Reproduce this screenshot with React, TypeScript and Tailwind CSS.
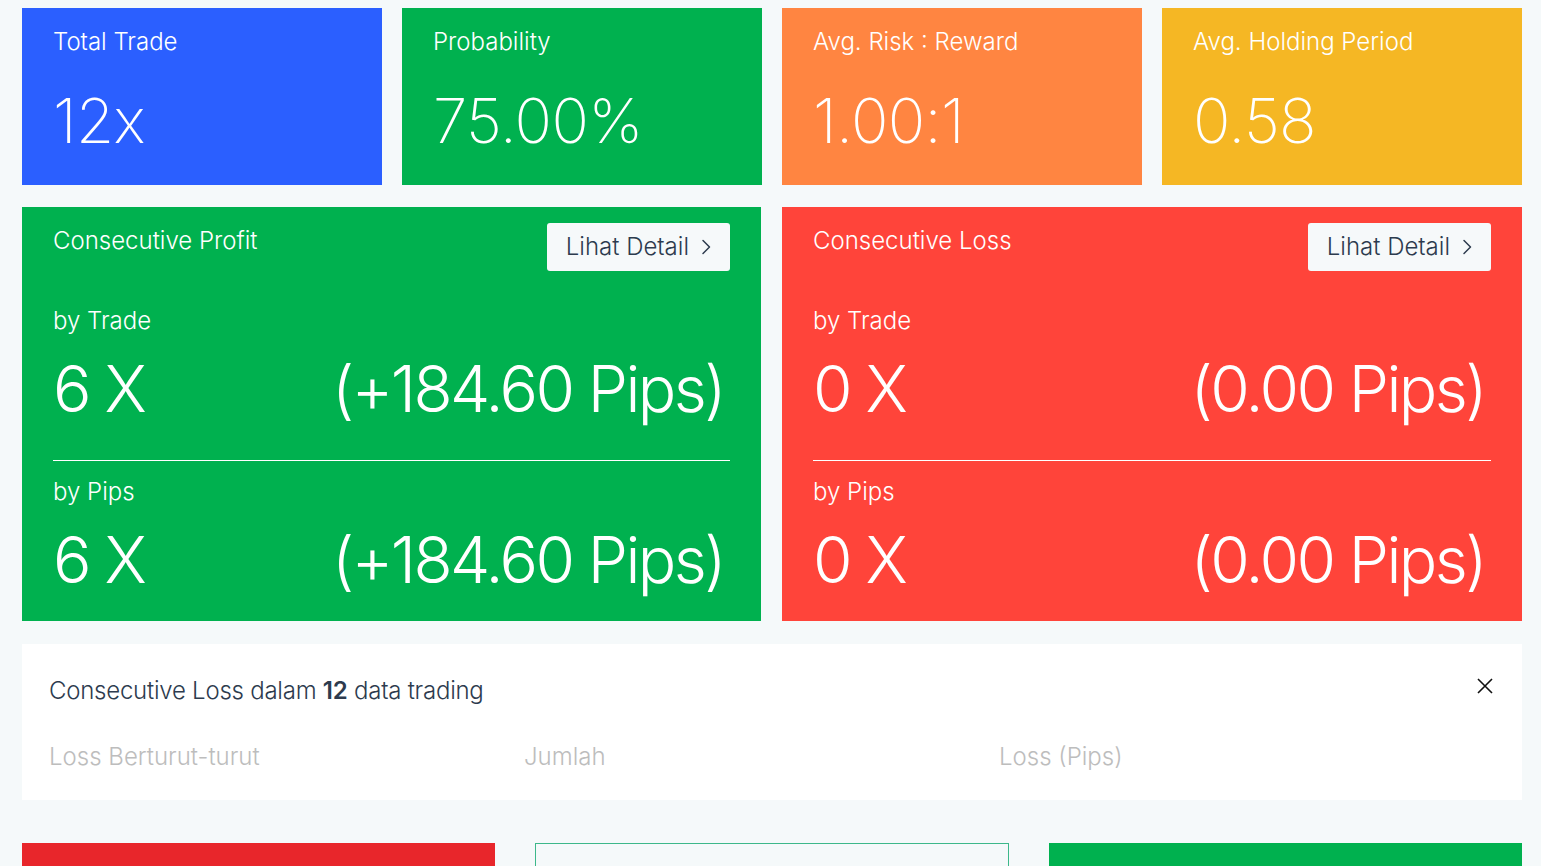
import React from 'react';

interface StatCard {
  label: string;
  value: string;
  bg: string;
}

const stats: StatCard[] = [
  { label: 'Total Trade', value: '12x', bg: 'bg-[#2b5fff]' },
  { label: 'Probability', value: '75.00%', bg: 'bg-[#00b14f]' },
  { label: 'Avg. Risk : Reward', value: '1.00:1', bg: 'bg-[#ff8541]' },
  { label: 'Avg. Holding Period', value: '0.58', bg: 'bg-[#f5b724]' },
];

const Chevron = () => (
  <svg width="14" height="16" viewBox="0 0 14 16" fill="none" stroke="currentColor" strokeWidth="1.5" strokeLinecap="round" strokeLinejoin="round">
    <path d="M4 1.5l6.5 6.5L4 14.5" />
  </svg>
);

interface ConsecutiveProps {
  title: string;
  count: string;
  pips: string;
  bg: string;
}

const ConsecutiveCard: React.FC<ConsecutiveProps> = ({ title, count, pips, bg }) => (
  <div className={`${bg} text-white px-[31px] pt-[16px] h-[414px]`}>
    <div className="flex items-start justify-between">
      <div className="text-[24px] font-light leading-[32px] pt-[2px]">{title}</div>
      <button className="h-[48px] pl-[19px] pr-[17px] flex items-center gap-[10px] rounded-[3px] bg-[#f6f9fa] text-[#2d3b4e] text-[24px] font-light">
        Lihat Detail
        <Chevron />
      </button>
    </div>
    <div className="mt-[36px] text-[24px] font-light leading-[28px]">by Trade</div>
    <div className="flex items-center justify-between text-[64px] font-light leading-[80px] mt-[14px] pr-[6px] tracking-[-0.04em]">
      <span>{count}</span>
      <span>{pips}</span>
    </div>
    <div className="border-t border-white mt-[31px]" />
    <div className="mt-[17px] text-[24px] font-light leading-[28px]">by Pips</div>
    <div className="flex items-center justify-between text-[64px] font-light leading-[80px] mt-[14px] pr-[6px] tracking-[-0.04em]">
      <span>{count}</span>
      <span>{pips}</span>
    </div>
  </div>
);

const App: React.FC = () => {
  return (
    <div className="min-h-[866px] h-[866px] overflow-hidden bg-[#f5f9fa] px-[22px] pt-[8px] font-['Inter',sans-serif]">
      <div className="grid grid-cols-4 gap-[20px] w-[1500px]">
        {stats.map((s) => (
          <div key={s.label} className={`${s.bg} text-white h-[177px] px-[31px] pt-[18px]`}>
            <div className="text-[24px] font-light leading-[32px]">{s.label}</div>
            <div className="text-[62px] font-extralight leading-[70px] mt-[28px] tracking-[-0.01em]">{s.value}</div>
          </div>
        ))}
      </div>

      <div className="grid grid-cols-[739px_740px] gap-[21px] mt-[22px]">
        <ConsecutiveCard title="Consecutive Profit" count="6 X" pips="(+184.60 Pips)" bg="bg-[#00b14f]" />
        <ConsecutiveCard title="Consecutive Loss" count="0 X" pips="(0.00 Pips)" bg="bg-[#ff443a]" />
      </div>

      <div className="w-[1500px] mt-[23px] bg-white h-[156px] px-[27px] pt-[31px]">
        <div className="flex items-center justify-between">
          <div className="text-[24px] font-light leading-[32px] text-[#2d3b4e] tracking-[-0.01em]">
            Consecutive Loss dalam <span className="font-semibold">12</span> data trading
          </div>
          <svg width="18" height="18" viewBox="0 0 18 18" className="mr-[1px] -mt-[10px]" stroke="#111" strokeWidth="1.6">
            <path d="M2 2l14 14M16 2L2 16" />
          </svg>
        </div>
        <div className="grid grid-cols-[475px_475px_1fr] mt-[34px] text-[24px] font-light leading-[32px] text-[#bdbdbd]">
          <div>Loss Berturut-turut</div>
          <div>Jumlah</div>
          <div>Loss (Pips)</div>
        </div>
      </div>

      <div className="grid grid-cols-3 gap-[40px] w-[1500px] mt-[43px]">
        <div className="h-[40px] bg-[#e8262b]" />
        <div className="h-[40px] border border-[#3cb88a] bg-[#f5f9fa]" />
        <div className="h-[40px] bg-[#00b14f]" />
      </div>
    </div>
  );
};

export default App;
